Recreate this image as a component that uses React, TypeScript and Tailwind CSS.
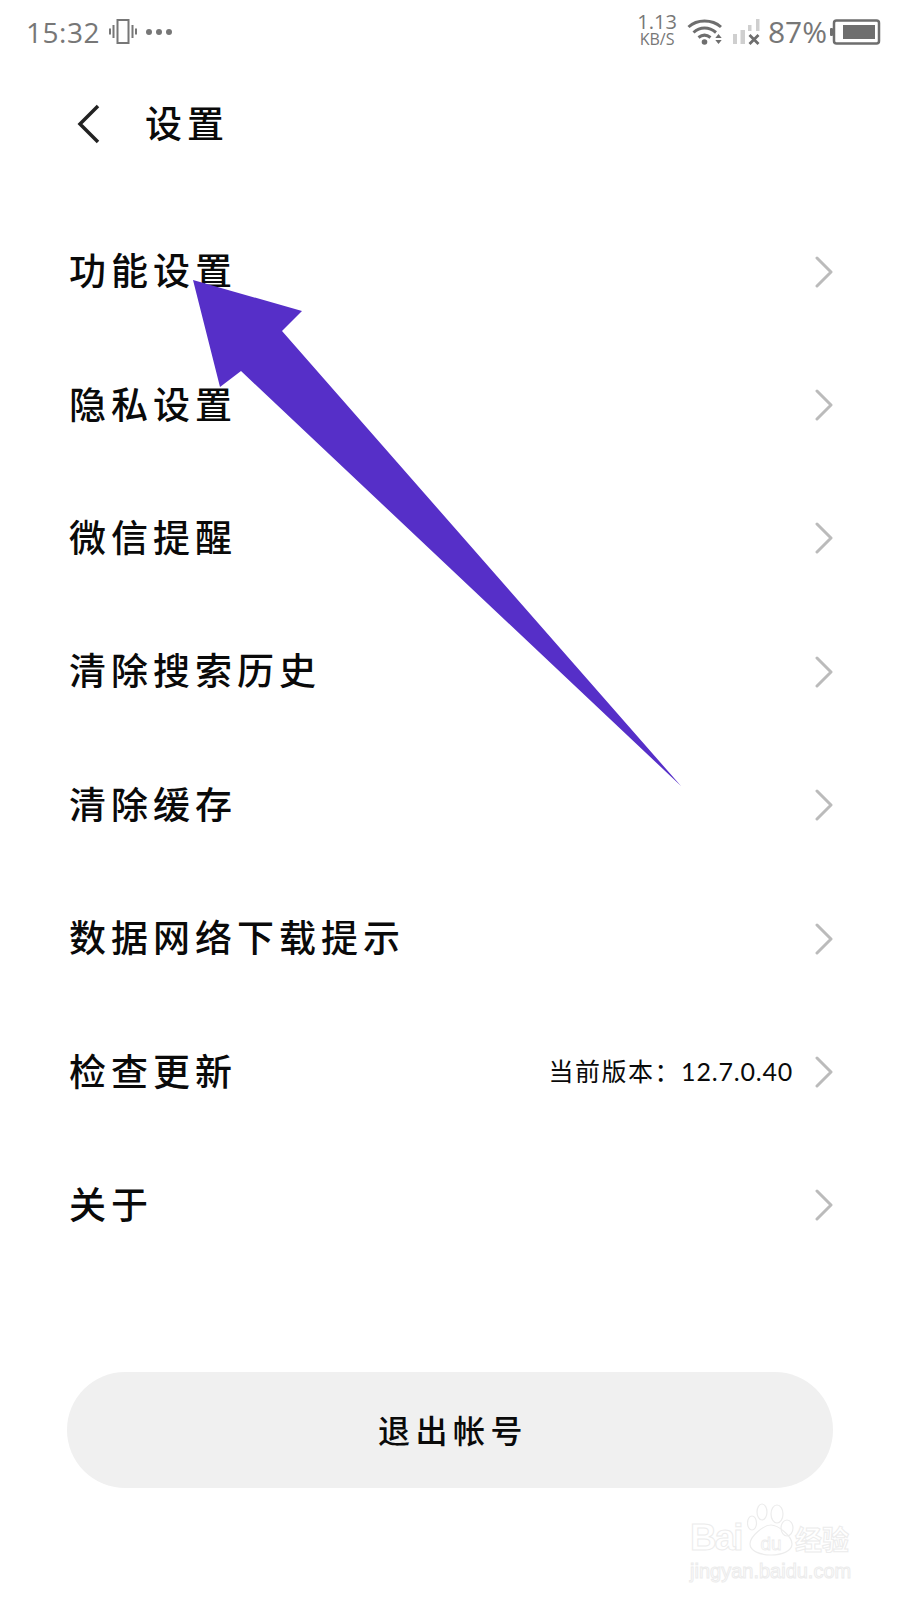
const rows = [
  { label: "功能设置" },
  { label: "隐私设置" },
  { label: "微信提醒" },
  { label: "清除搜索历史" },
  { label: "清除缓存" },
  { label: "数据网络下载提示" },
  { label: "检查更新", extra: "当前版本：", version: "12.7.0.40" },
  { label: "关于" },
];

function VibrateIcon() {
  return (
    <svg width="28" height="26" viewBox="0 0 28 26" fill="none" stroke="#777" strokeWidth="2">
      <rect x="8.5" y="1" width="11" height="23" />
      <path d="M4.5 6v13M1 9.500v6M23.500 6v13M27 9.500v6" />
    </svg>
  );
}

function WifiIcon() {
  return (
    <svg width="37" height="27" viewBox="0 0 37 27" fill="none" stroke="#6e6e6e" strokeWidth="3">
      <path d="M1.500 9C10 1 25 1 34 9" />
      <path d="M6.500 14.500C13 8.500 22 8.500 29 14.500" />
      <path d="M11.500 19.500c4-3.200 8-3.200 12 0" />
      <circle cx="17.500" cy="24" r="2.800" fill="#6e6e6e" stroke="none" />
      <path d="M31.500 16l-3.200 4h6.400zM31.500 26l-3.200-4h6.400z" fill="#6e6e6e" stroke="none" />
    </svg>
  );
}

function SignalIcon() {
  return (
    <svg width="27" height="26" viewBox="0 0 27 26" fill="#cfcfcf">
      <rect x="0" y="15" width="4" height="10" />
      <rect x="7.500" y="11" width="4.500" height="14" />
      <rect x="15" y="6" width="3.500" height="6" />
      <rect x="23" y="0" width="3.500" height="12" />
      <path d="M16.500 16l9 9M25.500 16l-9 9" stroke="#6e6e6e" strokeWidth="2.800" fill="none" />
    </svg>
  );
}

function BatteryIcon() {
  return (
    <svg width="51" height="26" viewBox="0 0 51 26" fill="none">
      <rect x="4" y="1.500" width="45" height="23" rx="2.500" stroke="#6e6e6e" strokeWidth="2.500" />
      <rect x="13" y="6" width="32" height="14" fill="#6e6e6e" />
      <rect x="0" y="9" width="3" height="8" rx="1" fill="#6e6e6e" />
    </svg>
  );
}

function RowChevron() {
  return (
    <svg width="18" height="32" viewBox="0 0 18 32" fill="none" stroke="#bbbbbb" strokeWidth="3" strokeLinecap="round" strokeLinejoin="round">
      <path d="M2 2l14 14L2 30" />
    </svg>
  );
}

function Watermark() {
  return (
    <div className="absolute left-[690px] top-[1503px] w-[165px] select-none font-['Liberation_Sans',sans-serif] text-transparent [-webkit-text-stroke:1px_#ececec]">
      <div className="flex h-[54px] items-end">
        <span className="w-[57px] pb-[1px] text-[37px] font-bold leading-[36px] tracking-[-2px]">Bai</span>
        <svg width="48" height="54" viewBox="0 0 48 54" fill="none" stroke="#ececec" strokeWidth="1.200">
          <ellipse cx="5" cy="20" rx="4.500" ry="7" />
          <ellipse cx="15" cy="9" rx="5" ry="8" />
          <ellipse cx="30" cy="11" rx="6" ry="9" />
          <ellipse cx="40" cy="25" rx="6" ry="8" />
          <path d="M24 22c7 0 21 11 21 19c0 7-10 11-21 11s-21-4-21-11c0-8 14-19 21-19z" />
          <text x="24" y="47" textAnchor="middle" fontSize="19" fontFamily="Liberation Sans, sans-serif" fill="none" strokeWidth="0.800">du</text>
        </svg>
        <span className="font-['Noto_Sans_CJK_SC',sans-serif] text-[27px] font-bold leading-[36px]">经验</span>
      </div>
      <div className="mt-[2px] text-[20px] leading-[24px]">jingyan.baidu.com</div>
    </div>
  );
}

export default function App() {
  return (
    <div className="relative h-[1600px] w-[900px] overflow-hidden bg-white font-['Noto_Sans_CJK_SC',sans-serif] text-[#0a0a0a]">
      {/* Status bar */}
      <div className="flex h-[60px] items-center justify-between pl-[26px] pr-[19px] pt-[3px] font-['Open_Sans',sans-serif] text-[#777]">
        <div className="flex items-center">
          <span className="text-[28px] leading-none tracking-[0.5px]">15:32</span>
          <span className="ml-[9px] flex"><VibrateIcon /></span>
          <span className="ml-[9px] flex gap-[4px]">
            <i className="h-[6px] w-[6px] rounded-full bg-[#777]" />
            <i className="h-[6px] w-[6px] rounded-full bg-[#777]" />
            <i className="h-[6px] w-[6px] rounded-full bg-[#777]" />
          </span>
        </div>
        <div className="flex items-center">
          <div className="mb-[3px] mr-[10px] flex flex-col items-center">
            <span className="text-[20px] leading-[18px]">1.13</span>
            <span className="text-[16px] leading-[16px]">KB/S</span>
          </div>
          <WifiIcon />
          <span className="ml-[9px] flex"><SignalIcon /></span>
          <span className="ml-[8px] text-[30px] leading-none">87%</span>
          <span className="ml-[3px] flex"><BatteryIcon /></span>
        </div>
      </div>

      {/* Header */}
      <div className="flex h-[126px] items-center pl-[76px]">
        <svg width="26" height="40" viewBox="0 0 26 40" fill="none" stroke="#222" strokeWidth="3.500" className="mt-[1px]">
          <path d="M22 2L4 20l18 18" />
        </svg>
        <h1 className="ml-[43px] pb-[2px] text-[37px] font-medium leading-none tracking-[5px]">设置</h1>
      </div>

      {/* Rows */}
      <div className="mt-[19px] flex flex-col">
        {rows.map((row) => (
          <div key={row.label} className="flex h-[133.4px] items-center justify-between pl-[69px] pr-[67px]">
            <span className="pb-[4px] text-[37px] font-medium leading-none tracking-[5px]">{row.label}</span>
            <div className="flex items-center">
              {row.extra && (
                <span className="mr-[22px] pb-[2px] text-[25px] leading-none tracking-[1.5px]">
                  {row.extra}
                  <span className="font-['Lato',sans-serif] tracking-[0.8px]">{row.version}</span>
                </span>
              )}
              <RowChevron />
            </div>
          </div>
        ))}
      </div>

      {/* Logout */}
      <div className="mx-[67px] mt-[100px] flex h-[116px] items-center justify-center rounded-[58px] bg-[#f0f0f0] pl-[6px]">
        <span className="pb-[2px] text-[32px] font-medium leading-none tracking-[5.5px]">退出帐号</span>
      </div>

      {/* Annotation arrow over the screenshot */}
      <svg className="absolute left-0 top-0" width="900" height="1600" viewBox="0 0 900 1600">
        <polygon points="193,280 302,311 282,331 681,786 241,371 220,387" fill="#562fc8" />
      </svg>

      <Watermark />
    </div>
  );
}
